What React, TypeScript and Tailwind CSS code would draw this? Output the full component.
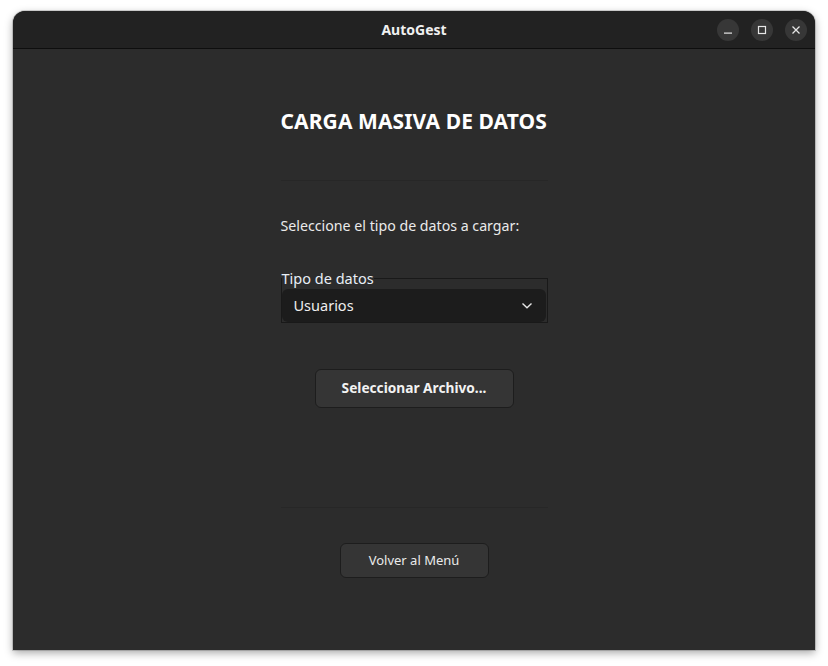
import React from "react";

const font = { fontFamily: '"Noto Sans", "Open Sans", sans-serif' };

export default function App() {
  return (
    <div
      className="w-[828px] h-[666px] bg-white pt-[11px] pl-[13px] overflow-hidden"
      style={font}
    >
      <div className="w-[802px] h-[639px] flex flex-col rounded-t-[12px] overflow-hidden bg-[#2c2c2c] shadow-[0_3px_9px_rgba(0,0,0,0.35),0_0_0_1px_rgba(0,0,0,0.15)]">
        {/* Title bar */}
        <div className="h-[38px] shrink-0 bg-[#222222] border-b border-[#0e0e0e] grid grid-cols-[1fr_auto_1fr] items-center">
          <div />
          <div className="text-[14px] font-bold text-[#f0f0f0] leading-none">AutoGest</div>
          <div className="flex justify-end gap-[12px] pr-[8px]">
            <div className="w-[22px] h-[22px] rounded-full bg-[#373737] flex items-center justify-center">
              <svg width="10" height="10" viewBox="0 0 10 10">
                <rect x="1" y="7.5" width="8" height="1.2" fill="#e6e6e6" />
              </svg>
            </div>
            <div className="w-[22px] h-[22px] rounded-full bg-[#373737] flex items-center justify-center">
              <svg width="10" height="10" viewBox="0 0 10 10">
                <rect x="1.5" y="1.5" width="7" height="7" fill="none" stroke="#e6e6e6" strokeWidth="1.2" />
              </svg>
            </div>
            <div className="w-[22px] h-[22px] rounded-full bg-[#373737] flex items-center justify-center">
              <svg width="10" height="10" viewBox="0 0 10 10">
                <path d="M1.5 1.5 L8.5 8.5 M8.5 1.5 L1.5 8.5" stroke="#e6e6e6" strokeWidth="1.3" />
              </svg>
            </div>
          </div>
        </div>

        {/* Content */}
        <div className="flex-1 flex flex-col items-center">
          <div className="w-[267px] flex flex-col">
            <div className="mt-[59px] text-[21px] font-bold text-white leading-[26px] tracking-[0.1px] whitespace-nowrap">
              CARGA MASIVA DE DATOS
            </div>
            <div className="mt-[46px] h-px bg-[#272727]" />
            <div className="mt-[35px] text-[14.2px] text-[#eaeaea] leading-[20px]">
              Seleccione el tipo de datos a cargar:
            </div>
            <fieldset className="mt-[33px] border border-[#191919] m-0 p-0 pr-[1px] min-w-0">
              <legend className="p-0 text-[14.5px] leading-[18px] text-[#e8eef6]">Tipo de datos</legend>
              <div className="h-[33px] mt-[2px] rounded-[6px] bg-[#1c1c1c] flex items-center justify-between pl-[12px] pr-[13px]">
                <span className="text-[14.5px] text-[#eeeeee]">Usuarios</span>
                <svg width="12" height="8" viewBox="0 0 12 8">
                  <path d="M1.5 1.5 L6 5.8 L10.5 1.5" fill="none" stroke="#e6e6e6" strokeWidth="1.4" />
                </svg>
              </div>
            </fieldset>
          </div>

          <button className="mt-[46px] w-[199px] h-[39px] rounded-[6px] bg-[#353535] border border-[#1d1d1d] text-[13.7px] font-bold text-[#f2f2f2]">
            Seleccionar Archivo...
          </button>

          <div className="mt-[99px] w-[267px] h-px bg-[#272727]" />

          <button className="mt-[35px] w-[149px] h-[35px] rounded-[6px] bg-[#353535] border border-[#1d1d1d] text-[13px] text-[#eaeaea]">
            Volver al Menú
          </button>
        </div>
      </div>
    </div>
  );
}
